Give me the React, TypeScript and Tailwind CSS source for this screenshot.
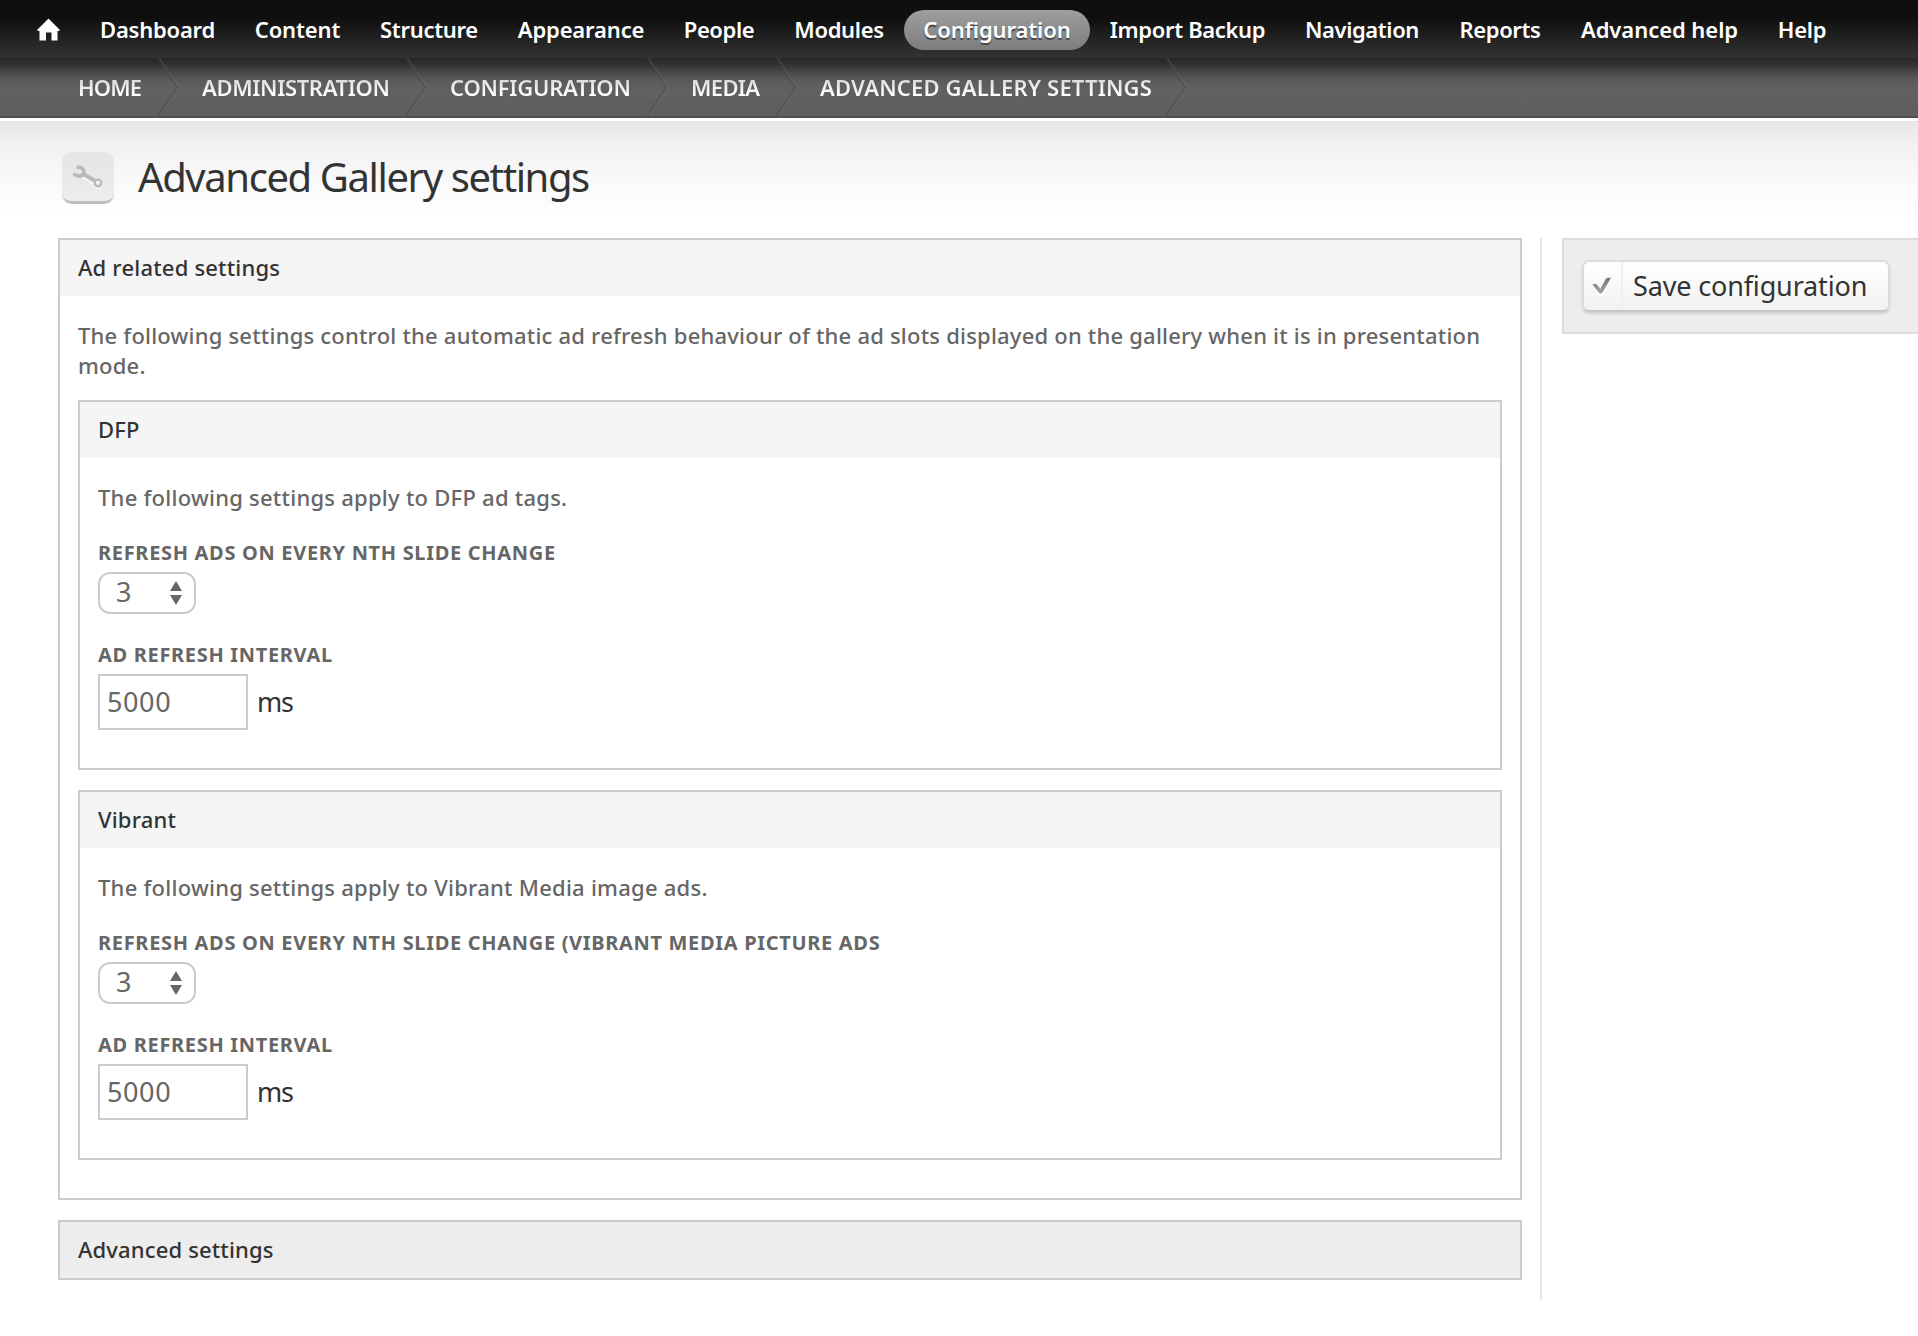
import type { ReactNode } from 'react';

const navItems = [
  { label: 'Dashboard', box: 'w-[155px] tracking-[-0.22px]' },
  { label: 'Content', box: 'w-[125px] tracking-[-0.15px]' },
  { label: 'Structure', box: 'w-[138px] tracking-[-0.3px]' },
  { label: 'Appearance', box: 'w-[166px] tracking-[-0.15px]' },
  { label: 'People', box: 'w-[110px] tracking-[-0.4px]' },
  { label: 'Modules', box: 'w-[130px] tracking-[-0.35px]' },
  { label: 'Configuration', box: 'w-[186px] tracking-[-0.1px]', active: true },
  { label: 'Import Backup', box: 'w-[195px] tracking-[-0.35px]' },
  { label: 'Navigation', box: 'w-[154px] tracking-[-0.4px]' },
  { label: 'Reports', box: 'w-[122px] tracking-[-0.4px]' },
  { label: 'Advanced help', box: 'w-[197px] tracking-[-0.05px]' },
  { label: 'Help', box: 'w-[88px] tracking-[-0.3px]' },
];

const crumbs = [
  { label: 'HOME', box: 'w-[124px] tracking-[-0.85px]' },
  { label: 'ADMINISTRATION', box: 'w-[248px] tracking-[-0.35px]' },
  { label: 'CONFIGURATION', box: 'w-[241px] tracking-[-0.22px]' },
  { label: 'MEDIA', box: 'w-[129px] tracking-[-0.65px]' },
  { label: 'ADVANCED GALLERY SETTINGS', box: 'w-[390px] tracking-[0.17px]' },
];

function HomeIcon() {
  return (
    <svg className="h-[23px] w-[23px]" viewBox="0 0 23 23" fill="#fff">
      <path d="M11.5 0.500 22.500 11.500V13H20.500V22.500H14.500V14.500H9V22.500H2.500V13H0.500V11.500Z" />
    </svg>
  );
}

function WrenchIcon() {
  return (
    <svg className="h-9 w-9" viewBox="0 0 36 36" fill="none">
      <g stroke="#fafafa" transform="translate(0 1.5)">
        <path d="M14 16.500 25.500 23.200" strokeWidth="4" />
        <circle cx="29" cy="25" r="3.400" strokeWidth="2.400" />
      </g>
      <g stroke="#b9b9b9">
        <path d="M7.600 9.700C12 8.200 15.200 11 14.800 14.600C14.200 18.600 8.800 19.600 4.600 15.600" strokeWidth="3.600" />
        <path d="M13.500 15.500 25.700 22.800" strokeWidth="4.200" />
        <circle cx="29" cy="25" r="3.300" strokeWidth="2.300" />
      </g>
    </svg>
  );
}

function CheckIcon() {
  return (
    <svg className="h-6 w-6" viewBox="0 0 24 24" fill="none">
      <defs>
        <linearGradient id="check" x1="0" y1="0" x2="0" y2="1">
          <stop offset="0" stopColor="#747474" />
          <stop offset="1" stopColor="#a6a6a6" />
        </linearGradient>
      </defs>
      <path d="M2.500 11.500H7.500L10.500 16 17 4H21.500L13 22H9Z" fill="#fff" />
      <path
        d="M2.500 10.500C4.500 9.600 6.500 10 7.500 11.200L10.300 15 16 4.600C17.300 3.600 19.500 3.500 21 3.800L12.600 18.600C11.600 20 9.600 20 8.600 18.600Z"
        fill="url(#check)"
      />
    </svg>
  );
}

function Legend({ children }: { children: ReactNode }) {
  return (
    <div className="flex h-14 items-center bg-[#f5f5f5] px-[18px] pb-[2px] text-[22px] font-medium tracking-[0.2px] text-[#333]">
      {children}
    </div>
  );
}

function Label({ children }: { children: ReactNode }) {
  return <div className="h-[30px] text-[20px] leading-[30px] font-bold tracking-[0.68px] text-[#666]">{children}</div>;
}

function AdPanel({ title, description, selectLabel }: { title: string; description: string; selectLabel: string }) {
  return (
    <section className="h-[370px] border-2 border-[#ccc]">
      <Legend>{title}</Legend>
      <div className="px-[18px] pt-6">
        <p className="h-[30px] text-[22px] leading-[30px] font-medium tracking-[0.25px] text-[#666]">{description}</p>
        <div className="mt-[26px]">
          <Label>{selectLabel}</Label>
          <div className="mt-1 flex h-[42px] w-[98px] items-center justify-between rounded-[12px] border-2 border-[#ccc] pr-3 pl-4 text-[27px] text-[#666]">
            <span className="pb-[1px]">3</span>
            <svg className="h-6 w-3" viewBox="0 0 12 24" fill="#666">
              <path d="M6 0 12 10H0ZM6 24 12 14H0Z" />
            </svg>
          </div>
        </div>
        <div className="mt-[26px]">
          <Label>AD REFRESH INTERVAL</Label>
          <div className="mt-1 flex items-center text-[27px] tracking-[0.6px]">
            <span className="flex h-14 w-[150px] items-center border-2 border-[#ccc] pl-[7px] text-[#666]">5000</span>
            <span className="ml-[9px] tracking-[-1.2px] text-[#333]">ms</span>
          </div>
        </div>
      </div>
    </section>
  );
}

export default function App() {
  return (
    <div className="min-h-[1336px] w-[1918px] overflow-hidden bg-white font-['Noto_Sans','Open_Sans',sans-serif]">
      <nav className="flex h-[58px] items-center bg-[linear-gradient(#0e0e0e,#0f0f0f_18px,#232323_40px,#333)] pl-[37px] text-white">
        <HomeIcon />
        <div className="ml-5 flex items-center">
          {navItems.map((n) => (
            <span
              key={n.label}
              className={`flex h-10 items-center justify-center text-[22px] font-semibold whitespace-nowrap ${n.box} ${
                n.active
                  ? 'mt-[2px] rounded-full bg-[linear-gradient(#9e9e9e,#7d7d7d)] pb-[1px] [text-shadow:0_2px_1px_#444]'
                  : ''
              }`}
            >
              {n.label}
            </span>
          ))}
        </div>
      </nav>

      <div className="flex h-[60px] border-b-2 border-[#504d4f] bg-[linear-gradient(#272727,#303030_6px,#4a4a4a_15px,#5c5c5c_24px,#616161_34px,#5e5e5e)] pl-[78px]">
        {crumbs.map((c) => (
          <div key={c.label} className={`flex shrink-0 items-center justify-between text-[22px] font-semibold whitespace-nowrap ${c.box}`}>
            <span className="bg-[linear-gradient(#dadada_25%,#fff_70%)] bg-clip-text text-transparent">{c.label}</span>
            <svg className="mr-[22px] h-[58px] w-[22px] shrink-0" viewBox="0 0 22 58" fill="none">
              <path d="M1.500 0 21 29.500 1.500 58" stroke="#777" strokeOpacity="0.3" strokeWidth="1.500" />
              <path d="M0 0 19.500 29.500 0 58" stroke="#404040" strokeOpacity="0.4" strokeWidth="1.500" />
            </svg>
          </div>
        ))}
      </div>

      <header className="flex h-[120px] items-center border-t-[3px] border-white bg-[linear-gradient(#e6e6e6,#f1f1f1_25px,#f8f8f8_52px,#fff_98px)] pl-[62px]">
        <span className="mb-[3px] flex h-[52px] w-[52px] items-center justify-center rounded-[10px] border-b-[3px] border-[#bdbdbd] bg-[linear-gradient(#e4e4e4,#ededed)] pr-[2px] pb-[2px]">
          <WrenchIcon />
        </span>
        <h1 className="mb-[6px] ml-6 text-[40px] tracking-[-1.4px] text-[#333]">Advanced Gallery settings</h1>
      </header>

      <main className="flex pl-[58px]">
        <div className="flex w-[1464px] flex-col gap-5">
          <section className="h-[962px] border-2 border-[#ccc]">
            <Legend>Ad related settings</Legend>
            <div className="px-[18px] pt-6">
              <p className="w-[1424px] text-[22px] leading-[30px] font-medium tracking-[0.21px] text-[#666]">
                The following settings control the automatic ad refresh behaviour of the ad slots displayed on the gallery when it is in
                presentation
                <br />
                mode.
              </p>
              <div className="mt-5 flex w-[1424px] flex-col gap-5">
                <AdPanel
                  title="DFP"
                  description="The following settings apply to DFP ad tags."
                  selectLabel="REFRESH ADS ON EVERY NTH SLIDE CHANGE"
                />
                <AdPanel
                  title="Vibrant"
                  description="The following settings apply to Vibrant Media image ads."
                  selectLabel="REFRESH ADS ON EVERY NTH SLIDE CHANGE (VIBRANT MEDIA PICTURE ADS"
                />
              </div>
            </div>
          </section>
          <section className="flex h-[60px] items-center border-2 border-[#ccc] bg-[#ededed] pb-[2px] pl-[18px] text-[22px] font-medium tracking-[0.15px] text-[#333]">
            Advanced settings
          </section>
        </div>

        <div className="ml-[18px] h-[1062px] w-[2px] bg-[#e6e6e6]" />

        <aside className="ml-5 h-24 w-[356px] border-2 border-r-0 border-[#ddd] bg-[#ededed] pt-5 pl-[18px]">
          <button className="flex h-[52px] w-[308px] items-center rounded-[7px] border-2 border-[#dcdcdc] border-b-[#c6c6c6] bg-[linear-gradient(#fff,#f2f2f2)] text-[27px] tracking-[-0.15px] text-[#333] shadow-[0_2px_3px_#0000001f]">
            <span className="flex h-full w-[39px] items-center border-r-2 border-[#f0f0f0] pl-[6px]">
              <CheckIcon />
            </span>
            <span className="ml-[10px] whitespace-nowrap">Save configuration</span>
          </button>
        </aside>
      </main>
    </div>
  );
}
